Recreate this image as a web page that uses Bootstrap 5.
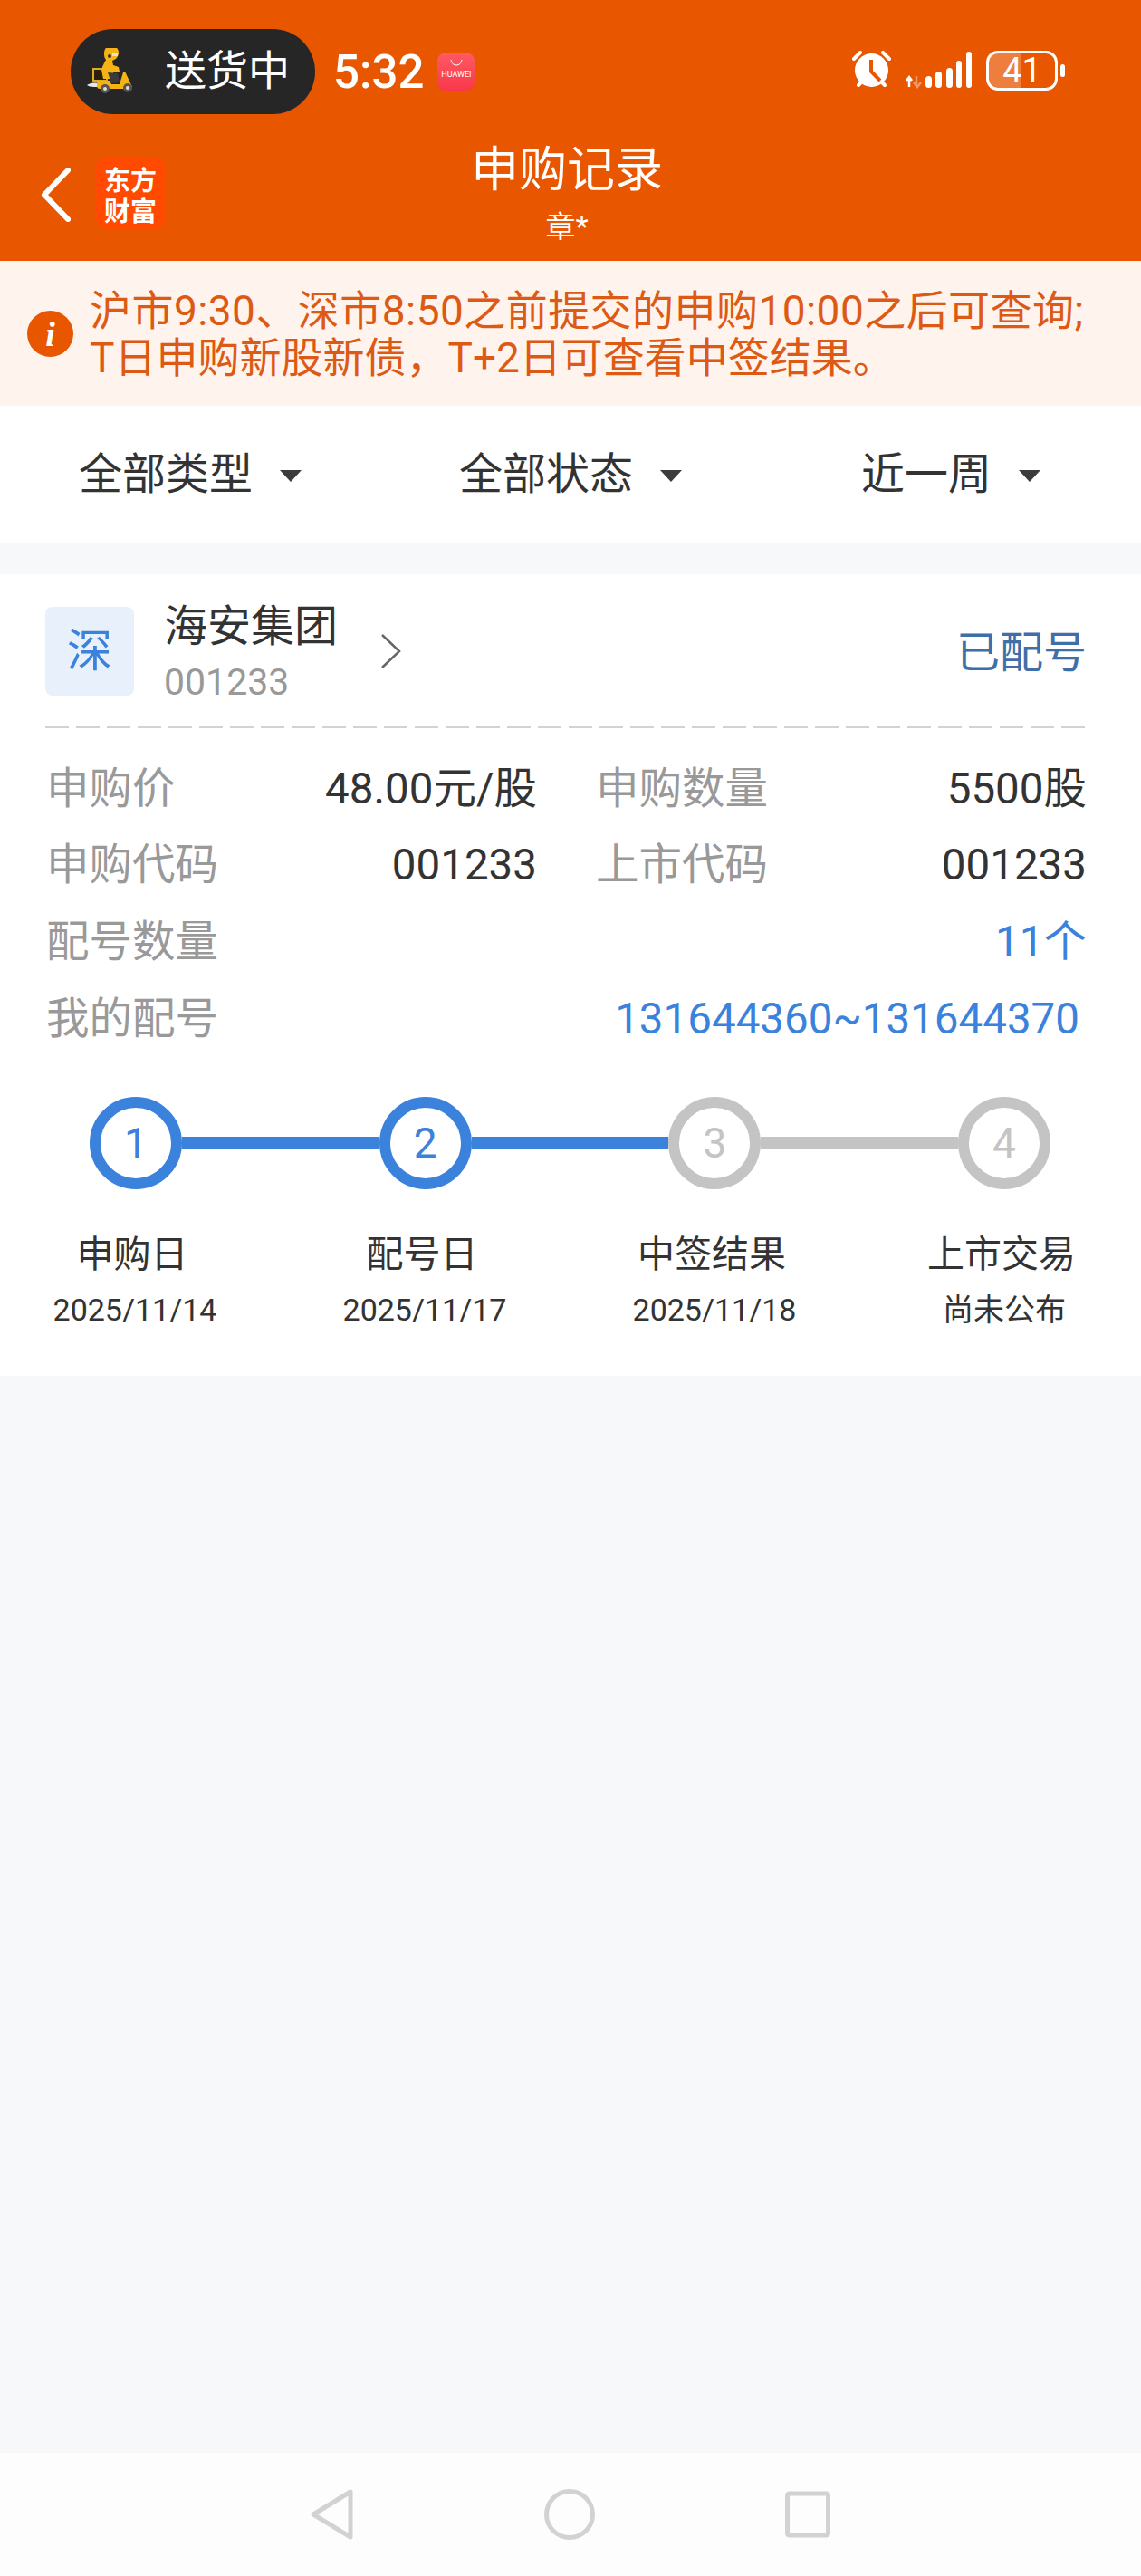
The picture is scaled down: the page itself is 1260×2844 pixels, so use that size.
<!DOCTYPE html>
<html lang="zh-CN">
<head>
    <meta charset="UTF-8">
    <meta name="viewport" content="width=device-width, initial-scale=1.0">
    <title>申购记录</title>
    <link href="https://cdn.jsdelivr.net/npm/bootstrap@5.3.0/dist/css/bootstrap.min.css" rel="stylesheet">
    <style>
        body {
            font-family: Roboto, "Noto Sans CJK SC", sans-serif;
            background-color: #f7f8fa;
            color: #333;
        }
        /* 顶部橙色区域 */
        .top-area { background-color: #e85600; color: #fff; height: 288px; }
        .status-row { height: 126px; padding: 32px 84px 0 78px; }
        .delivery-pill {
            width: 270px; height: 94px; border-radius: 47px;
            background-color: #262626; padding-left: 16px;
            font-size: 46px; line-height: 1;
        }
        .delivery-pill svg { margin-right: -30px; }
        .delivery-pill span { margin-left: 62px; margin-top: -2px; }
        .clock-text { height: 94px; font-size: 51px; line-height: 1; margin-left: 20px; font-weight: 500; }
        .shop-wrap { height: 94px; }
        .shop-icon {
            width: 41px; height: 42px; border-radius: 9px; margin: 26px 0 0 15px;
            background: linear-gradient(#ff5a64, #f8384a);
            font-size: 9px; line-height: 1;
        }
        .shop-icon svg { margin-top: 7px; }
        .shop-icon span { margin-top: 3px; }
        .status-icons { padding-top: 24px; }
        .signal-icon { margin-left: 16px; }
        .battery-box {
            width: 79px; height: 44px; border: 3px solid #fff; border-radius: 13px; margin-left: 16px;
            background: linear-gradient(to right, rgba(255,255,255,.24) 48%, transparent 48%);
            font-size: 38px; line-height: 1;
        }
        .battery-tip { width: 5px; height: 14px; border-radius: 3px; background-color: #fff; margin: 15px 0 0 3px; }
        .title-row {
            height: 162px; padding-right: 8px;
            display: grid; grid-template-columns: 1fr auto 1fr;
        }
        .title-left { padding: 47px 0 0 45px; }
        .back-arrow { margin-top: 12px; }
        .app-logo { margin-left: 27px; }
        .app-logo text {
            font-family: "Noto Sans CJK SC", sans-serif;
            font-size: 29px; font-weight: 700; fill: #fff; text-anchor: middle;
        }
        .page-title { font-size: 53px; line-height: 60px; margin-top: 32px; text-align: center; }
        .page-sub { font-size: 33px; line-height: 40px; margin-top: 13px; text-align: center; }
        /* 提示 */
        .tip-bar { background-color: #fff3ee; color: #dd5a14; height: 160px; padding: 29px 0 0 30px; font-size: 46px; line-height: 52px; }
        .tip-first { letter-spacing: .45px; }
        .tip-icon {
            width: 51px; height: 51px; border-radius: 50%; background-color: #e85600; color: #fff;
            font-family: "Liberation Serif", serif; font-style: italic; font-weight: 700; font-size: 38px;
            margin: 26px 18px 0 0; line-height: 1;
        }
        /* 筛选 */
        .filter-bar { background-color: #fff; height: 152px; margin-bottom: 34px; }
        .filter-btn {
            border: 0; padding: 0; font-size: 48px; line-height: 60px; color: #333; background: none;
        }
        .filter-btn::after {
            margin-left: 30px; vertical-align: 8px;
            border-top: 13px solid #3c3c3c; border-left: 12.5px solid transparent;
            border-right: 12.5px solid transparent; border-bottom: 0;
        }
        /* 记录卡片 */
        .record-box { background-color: #fff; height: 885px; }
        .record-head {
            margin: 0 60px 0 50px; height: 170px; padding-top: 36px;
            background: repeating-linear-gradient(to right, #d2d2d2 0 26px, transparent 26px 34px) left bottom / 100% 2px no-repeat;
        }
        .market-tag {
            width: 98px; height: 98px; border-radius: 8px; background-color: #e8f1fb; color: #3a82dc;
            font-size: 50px; line-height: 1;
        }
        .stock-info { margin-left: 33px; }
        .stock-name { font-size: 48px; line-height: 54px; margin-top: -5px; }
        .stock-code { font-size: 41px; line-height: 46px; color: #999; margin-top: 11px; }
        .head-chevron { margin: 30px 0 0 47px; }
        .status-text { color: #3e6fa8; font-size: 48px; line-height: 54px; margin-top: 24px; }
        .info-area { padding: 25px 60px 0 51px; font-size: 47.5px; }
        .info-line { height: 84.7px; --bs-gutter-x: 65px; }
        .info-key { color: #999; }
        .blue-val { color: #3a82dc; }
        .step-track { padding: 43px 100px 0 99px; }
        .step-dot {
            width: 102px; height: 102px; border-radius: 50%; border: 12px solid #3a82dc;
            color: #3a82dc; font-size: 46px; line-height: 1; flex-shrink: 0;
        }
        .step-dot.todo { border-color: #c4c4c4; color: #c4c4c4; }
        .step-line { height: 13px; background-color: #3a82dc; }
        .step-line.todo { background-color: #c4c4c4; }
        .step-labels { padding: 47px 100px 0 98px; }
        .step-cell { width: 102px; white-space: nowrap; }
        .step-name { font-size: 41px; line-height: 50px; margin-right: 6px; }
        .step-date { font-size: 34px; line-height: 40px; margin-top: 16px; }
        /* 底部导航 */
        .bottom-nav { background-color: #fdfdfd; height: 136px; gap: 210px; }
    </style>
</head>
<body class="d-flex flex-column min-vh-100">

<!-- 状态栏和标题 -->
<div class="top-area">
    <div class="status-row d-flex">
        <div class="delivery-pill d-flex align-items-center">
            <svg width="56" height="52" viewBox="0 0 56 52" class="flex-shrink-0">
                <path d="M2 41c3-2 7-3 12-2l-1 4c-4 0-8 0-11-2z" fill="#e8e8e8"/>
                <rect x="9" y="23" width="15" height="13" fill="#2a2208" stroke="#e5a91c" stroke-width="2"/>
                <path d="M21 5a8 8 0 1 1 15 4c-1 3-4 4-6 5l1 5 6 2 1 5-7 1 1 7-12 0-2-10c2-6 4-9 5-11-2-2-2-5-2-8z" fill="#f5b316"/>
                <path d="M30 5h6v4h-6z" fill="#e8e0d0"/>
                <circle cx="27" cy="9" r="2" fill="#333"/>
                <path d="M25 27l11 1 2 10-9 1z" fill="#3a3a3a"/>
                <path d="M14 36h13l2 4h9l4-13 2-1 8 17-3 2H16c-3 0-4-3-2-10z" fill="#f5b316"/>
                <circle cx="22" cy="45" r="5" fill="#555"/><circle cx="22" cy="45" r="2" fill="#ddd"/>
                <circle cx="47" cy="44" r="5" fill="#555"/><circle cx="47" cy="44" r="2" fill="#ddd"/>
            </svg>
            <span>送货中</span>
        </div>
        <div class="clock-text d-flex align-items-center">5:32</div>
        <div class="shop-wrap d-flex align-items-start">
            <div class="shop-icon d-flex flex-column align-items-center">
                <svg width="16" height="10" viewBox="0 0 16 10"><path d="M2 1c1 8 11 8 12 0" fill="none" stroke="#fff" stroke-width="1"/></svg>
                <span>HUAWEI</span>
            </div>
        </div>
        <div class="status-icons ms-auto d-flex align-items-start">
            <!-- 闹钟 -->
            <svg width="43" height="42" viewBox="0 0 43 42">
                <path d="M2 9l7-7M41 9l-7-7" stroke="#fff" stroke-width="4" stroke-linecap="round"/>
                <path d="M7 38l5-5M36 38l-5-5" stroke="#fff" stroke-width="4" stroke-linecap="round"/>
                <circle cx="21.5" cy="21.5" r="18.5" fill="#fff"/>
                <path d="M21 10v13l10 10" fill="none" stroke="#e85600" stroke-width="4"/>
            </svg>
            <!-- 信号 -->
            <svg class="signal-icon" width="73" height="42" viewBox="0 0 73 42">
                <path d="M4 40V30M1 33l3-4 3 4" fill="none" stroke="#fff" stroke-width="2.5"/>
                <path d="M12 28v11M9 35l4 5 4-5" fill="none" stroke="#fff" stroke-opacity=".4" stroke-width="2.5"/>
                <rect x="22" y="28" width="7" height="13" rx="3.5" fill="#fff"/>
                <rect x="33" y="23" width="7" height="18" rx="3.5" fill="#fff"/>
                <rect x="45" y="19" width="7" height="22" rx="3.5" fill="#fff"/>
                <rect x="56" y="11" width="6" height="30" rx="3" fill="#fff"/>
                <rect x="67" y="1" width="6" height="40" rx="3" fill="#fff"/>
            </svg>
            <div class="battery-box d-flex align-items-center justify-content-center">41</div>
            <div class="battery-tip"></div>
        </div>
    </div>
    <div class="title-row">
        <div class="title-left d-flex align-items-start">
            <svg class="back-arrow flex-shrink-0" width="33" height="60" viewBox="0 0 33 60"><path d="M30 3L4 30l26 27" fill="none" stroke="#fff" stroke-width="6" stroke-linecap="round" stroke-linejoin="round"/></svg>
            <svg class="app-logo flex-shrink-0" width="78" height="80" viewBox="0 0 78 80">
                <rect width="78" height="80" rx="14" fill="#ff4a00"/>
                <text x="39" y="37">东方</text>
                <text x="39" y="71">财富</text>
            </svg>
        </div>
        <div>
            <div class="page-title">申购记录</div>
            <div class="page-sub">章*</div>
        </div>
        <div></div>
    </div>
</div>

<!-- 提示 -->
<div class="tip-bar d-flex">
    <div class="tip-icon d-flex align-items-center justify-content-center flex-shrink-0">i</div>
    <div><span class="tip-first">沪市9:30、深市8:50之前提交的申购10:00之后可查询;</span><br>T日申购新股新债，T+2日可查看中签结果。</div>
</div>

<!-- 筛选 -->
<div class="filter-bar row g-0 align-items-center">
    <div class="col-4 text-center"><button type="button" class="btn dropdown-toggle filter-btn">全部类型</button></div>
    <div class="col-4 text-center"><button type="button" class="btn dropdown-toggle filter-btn">全部状态</button></div>
    <div class="col-4 text-center"><button type="button" class="btn dropdown-toggle filter-btn">近一周</button></div>
</div>

<!-- 记录 -->
<div class="record-box">
    <div class="record-head d-flex align-items-start">
        <div class="market-tag d-flex align-items-center justify-content-center flex-shrink-0">深</div>
        <div class="stock-info">
            <div class="stock-name">海安集团</div>
            <div class="stock-code">001233</div>
        </div>
        <svg class="head-chevron" width="23" height="38" viewBox="0 0 23 38"><path d="M2 1l19 18L2 37" fill="none" stroke="#666" stroke-width="2.5"/></svg>
        <div class="status-text ms-auto">已配号</div>
    </div>

    <div class="info-area">
        <div class="row info-line align-items-center">
            <div class="col-6 d-flex justify-content-between"><span class="info-key">申购价</span><span>48.00元/股</span></div>
            <div class="col-6 d-flex justify-content-between"><span class="info-key">申购数量</span><span>5500股</span></div>
        </div>
        <div class="row info-line align-items-center">
            <div class="col-6 d-flex justify-content-between"><span class="info-key">申购代码</span><span>001233</span></div>
            <div class="col-6 d-flex justify-content-between"><span class="info-key">上市代码</span><span>001233</span></div>
        </div>
        <div class="row info-line align-items-center">
            <div class="col-12 d-flex justify-content-between"><span class="info-key">配号数量</span><span class="blue-val">11个</span></div>
        </div>
        <div class="row info-line align-items-center">
            <div class="col-12 d-flex justify-content-between"><span class="info-key">我的配号</span><span class="blue-val pe-2">131644360~131644370</span></div>
        </div>
    </div>

    <div class="step-track d-flex align-items-center">
        <div class="step-dot d-flex align-items-center justify-content-center">1</div>
        <div class="step-line flex-grow-1"></div>
        <div class="step-dot d-flex align-items-center justify-content-center">2</div>
        <div class="step-line flex-grow-1"></div>
        <div class="step-dot todo d-flex align-items-center justify-content-center">3</div>
        <div class="step-line todo flex-grow-1"></div>
        <div class="step-dot todo d-flex align-items-center justify-content-center">4</div>
    </div>
    <div class="step-labels d-flex justify-content-between">
        <div class="step-cell d-flex flex-column align-items-center"><div class="step-name">申购日</div><div class="step-date">2025/11/14</div></div>
        <div class="step-cell d-flex flex-column align-items-center"><div class="step-name">配号日</div><div class="step-date">2025/11/17</div></div>
        <div class="step-cell d-flex flex-column align-items-center"><div class="step-name">中签结果</div><div class="step-date">2025/11/18</div></div>
        <div class="step-cell d-flex flex-column align-items-center"><div class="step-name">上市交易</div><div class="step-date">尚未公布</div></div>
    </div>
</div>

<div class="flex-grow-1"></div>

<!-- 底部导航 -->
<div class="bottom-nav d-flex justify-content-center align-items-center flex-shrink-0">
    <svg width="48" height="56" viewBox="0 0 48 56"><path d="M44 3L3 28l41 25z" fill="none" stroke="#d2d2d2" stroke-width="5" stroke-linejoin="round"/></svg>
    <svg width="56" height="56" viewBox="0 0 56 56"><circle cx="28" cy="28" r="25.5" fill="none" stroke="#d2d2d2" stroke-width="5"/></svg>
    <svg width="50" height="52" viewBox="0 0 50 52"><rect x="2.5" y="3" width="45" height="46" rx="2" fill="none" stroke="#d2d2d2" stroke-width="5"/></svg>
</div>

<script src="https://cdn.jsdelivr.net/npm/bootstrap@5.3.0/dist/js/bootstrap.bundle.min.js"></script>
</body>
</html>
